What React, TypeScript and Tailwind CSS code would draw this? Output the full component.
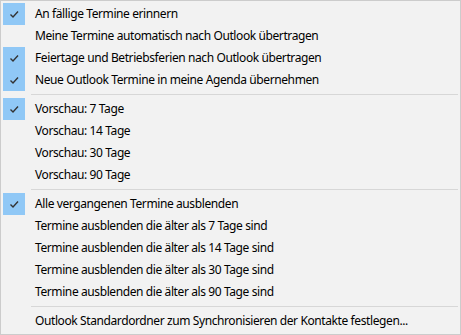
const sections: { label: string; checked?: boolean }[][] = [
  [
    { label: "An fällige Termine erinnern", checked: true },
    { label: "Meine Termine automatisch nach Outlook übertragen" },
    { label: "Feiertage und Betriebsferien nach Outlook übertragen", checked: true },
    { label: "Neue Outlook Termine in meine Agenda übernehmen", checked: true },
  ],
  [
    { label: "Vorschau: 7 Tage", checked: true },
    { label: "Vorschau: 14 Tage" },
    { label: "Vorschau: 30 Tage" },
    { label: "Vorschau: 90 Tage" },
  ],
  [
    { label: "Alle vergangenen Termine ausblenden", checked: true },
    { label: "Termine ausblenden die älter als 7 Tage sind" },
    { label: "Termine ausblenden die älter als 14 Tage sind" },
    { label: "Termine ausblenden die älter als 30 Tage sind" },
    { label: "Termine ausblenden die älter als 90 Tage sind" },
  ],
  [{ label: "Outlook Standardordner zum Synchronisieren der Kontakte festlegen..." }],
];

function Check() {
  return (
    <svg width="22" height="22" viewBox="0 0 22 22">
      <path d="M7.5 11.5 L10 14 L15 8.5" fill="none" stroke="#333" strokeWidth="1.4" />
    </svg>
  );
}

export default function App() {
  return (
    <div
      className="w-[461px] h-[335px] border border-[#cccccc] bg-[#f2f2f2] p-[2px] text-[12px] tracking-[-0.4px] text-black"
      style={{ fontFamily: '"Noto Sans", sans-serif' }}
    >
      {sections.map((items, i) => (
        <div key={i}>
          {i > 0 && (
            <div className="h-[7px] flex items-center pl-[28px]">
              <div className="h-px w-full bg-[#d7d7d7]" />
            </div>
          )}
          {items.map((it) => (
            <div key={it.label} className="h-[22px] flex items-center">
              <div className={"w-[22px] h-[22px] " + (it.checked ? "bg-[#90c8f6]" : "")}>
                {it.checked && <Check />}
              </div>
              <span className="ml-[10px] leading-none whitespace-nowrap">{it.label}</span>
            </div>
          ))}
        </div>
      ))}
    </div>
  );
}
